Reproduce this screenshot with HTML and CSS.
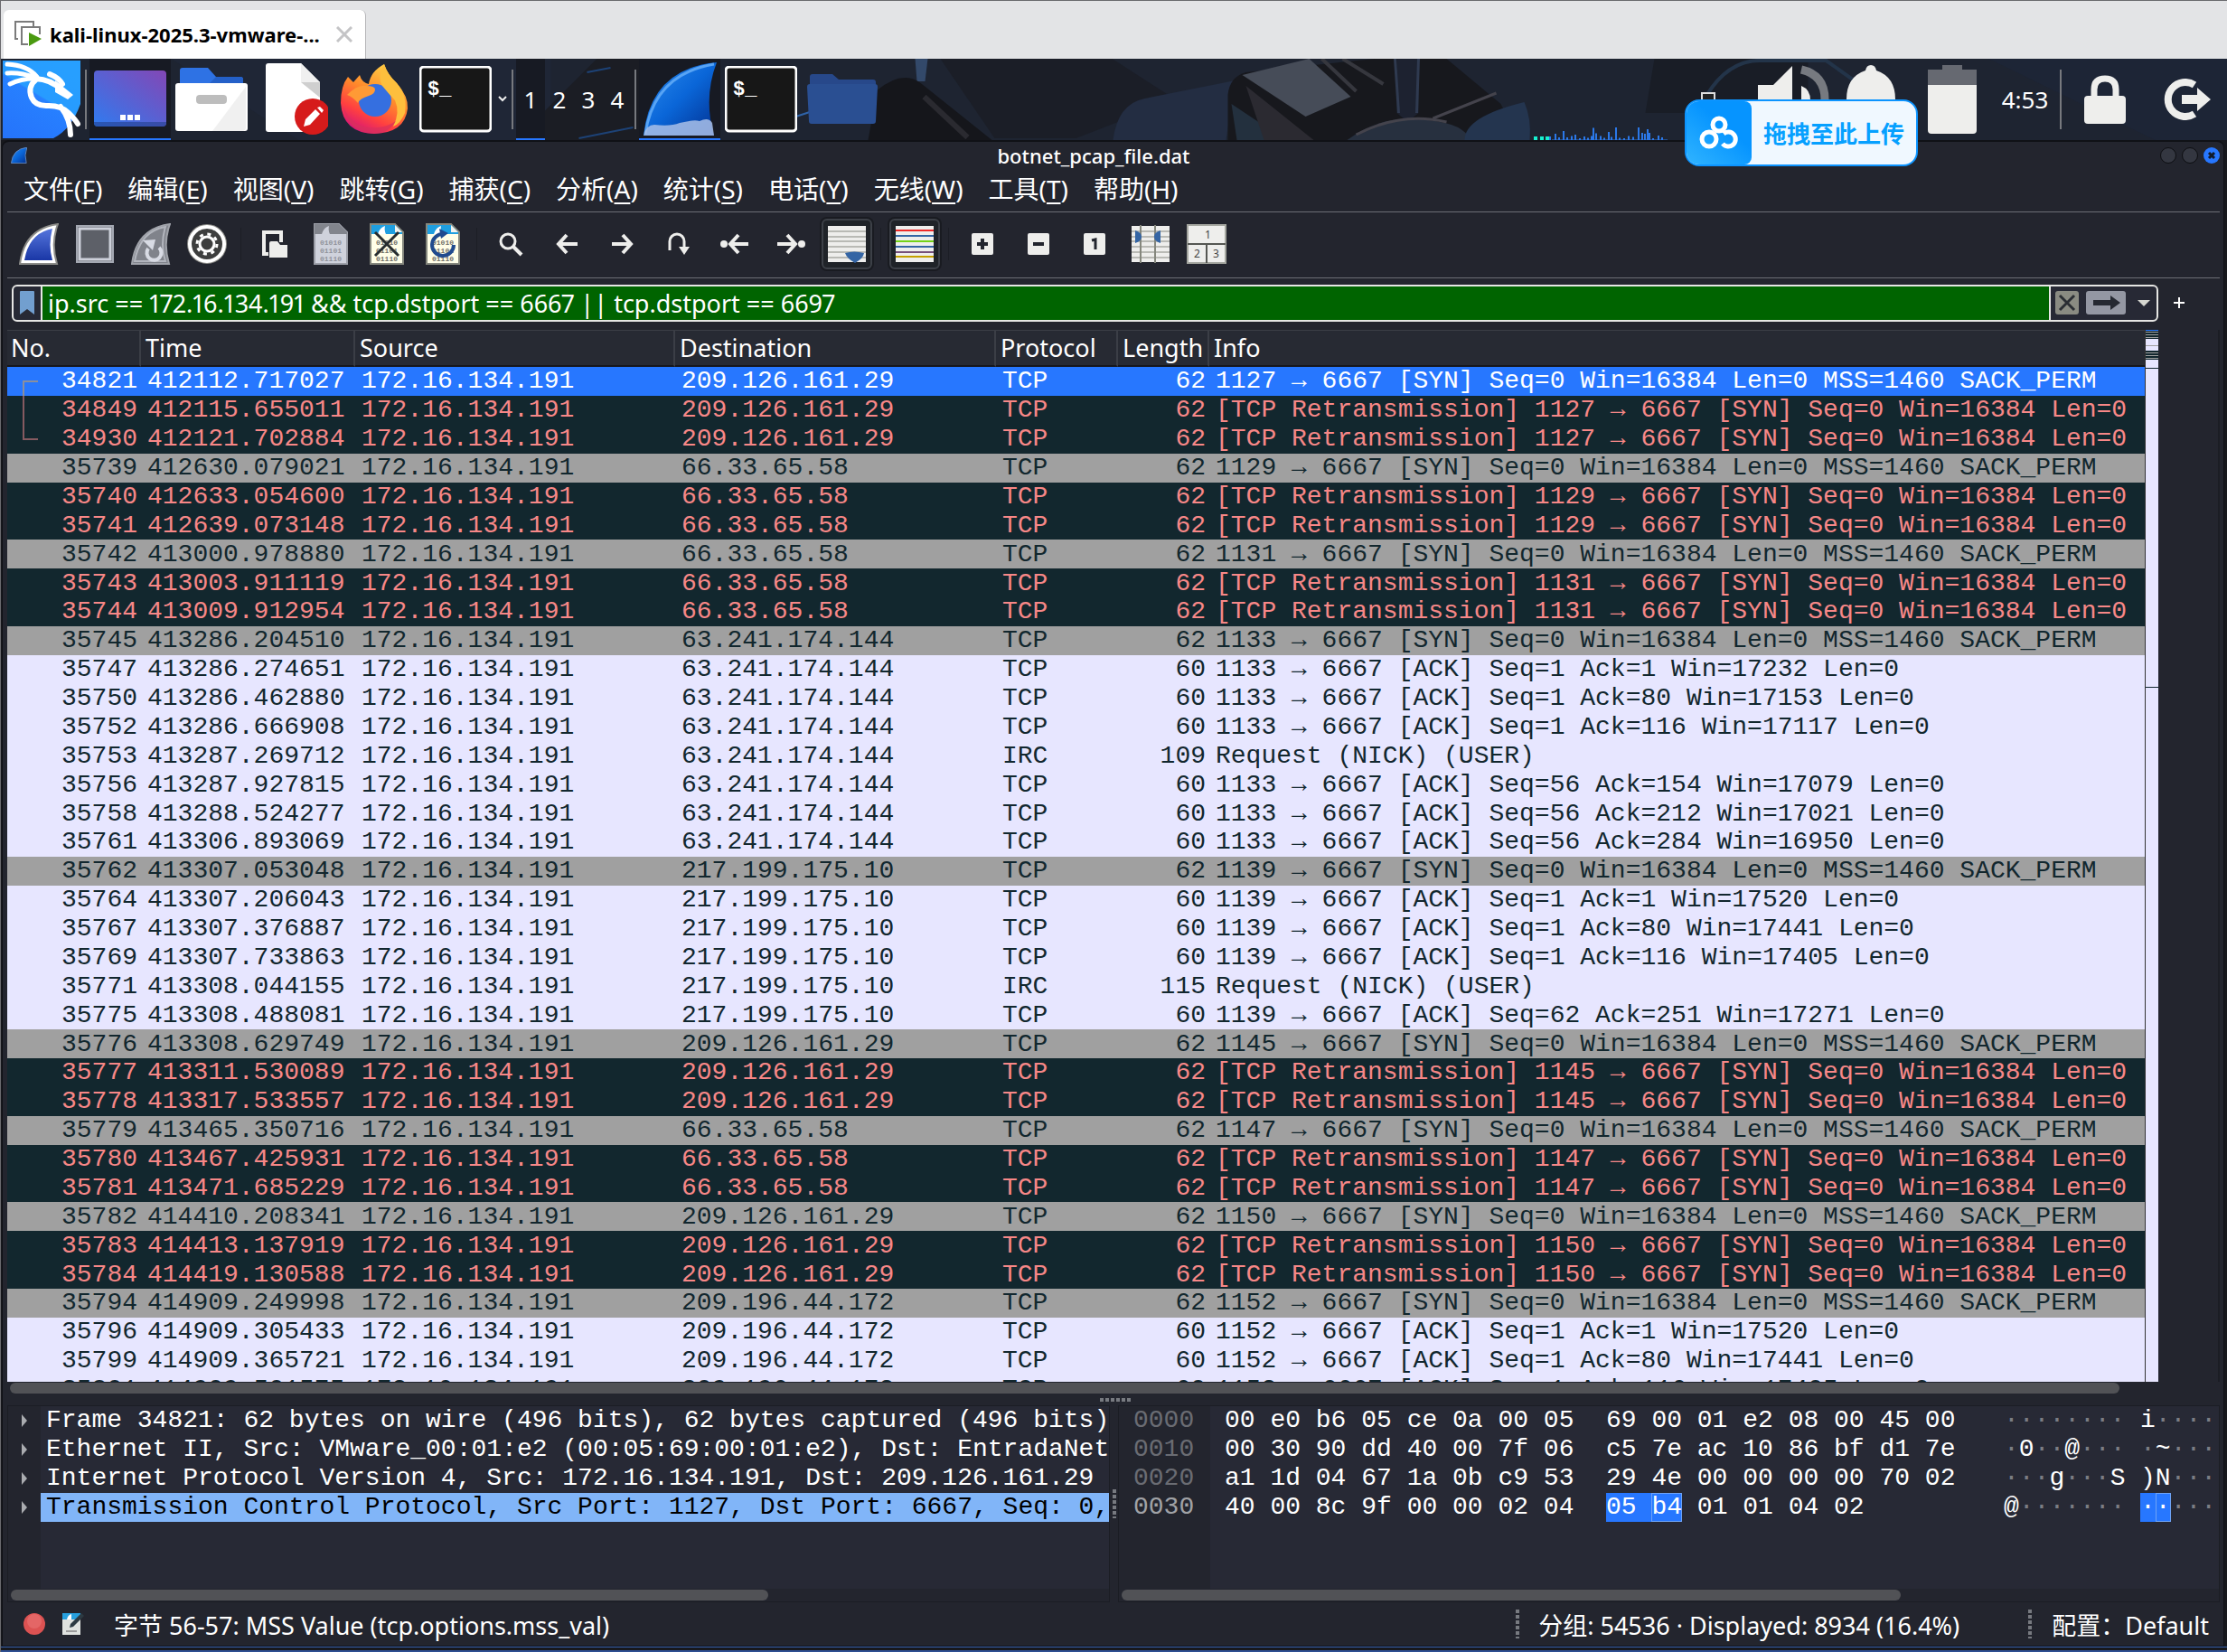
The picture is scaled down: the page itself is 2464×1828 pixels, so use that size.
FILE: index.html
```html
<!DOCTYPE html>
<html lang="zh-CN">
<head>
<meta charset="utf-8">
<title>botnet_pcap_file.dat</title>
<link rel="stylesheet" href="styles.css">
</head>
<body>
<svg class="defs" aria-hidden="true">
  <defs>
    <linearGradient id="finBlue" x1="0" y1="0" x2="1" y2="1"><stop offset="0" stop-color="#2d8cf0"/><stop offset=".5" stop-color="#0a66d8"/><stop offset="1" stop-color="#022f8e"/></linearGradient>
    <linearGradient id="finTool" x1="0" y1="0" x2="0" y2="1"><stop offset="0" stop-color="#5575dc"/><stop offset="1" stop-color="#1a37a6"/></linearGradient>
    <linearGradient id="desk" x1="0" y1="1" x2="1" y2="0"><stop offset="0" stop-color="#2f7bf0"/><stop offset="1" stop-color="#8347b5"/></linearGradient>
    <linearGradient id="kaliBg" x1="0" y1="1" x2=".6" y2="0"><stop offset="0" stop-color="#2573fb"/><stop offset=".6" stop-color="#2780ff"/><stop offset=".62" stop-color="#279bff"/><stop offset="1" stop-color="#279fff"/></linearGradient>
    <linearGradient id="foxBody" x1=".8" y1="0" x2=".3" y2="1"><stop offset="0" stop-color="#ffd94a"/><stop offset=".45" stop-color="#ff8a2b"/><stop offset=".75" stop-color="#ff4040"/><stop offset="1" stop-color="#d4147a"/></linearGradient>
    <symbol id="page" viewBox="0 0 38 46"><path d="M1 1h27l9 9v35H1z" fill="#fffee8" stroke="#85877d" stroke-width="2"/><path d="M2 2h26l8 8v2H2z" fill="#1f9fe0"/><path d="M9 12q2-7 8-9-1 5 1 9z" fill="#fff"/><path d="M28 2v8h8z" fill="#f2f2ee"/></symbol>
  </defs>
</svg>

<header class="tabs">
  <div class="tab">
    <svg class="tab-icon" width="32" height="30" viewBox="0 0 32 30"><path d="M4 20H1V1h20v5" fill="none" stroke="#7b7b7b" stroke-width="2"/><path d="M15 26H8V7h20v8" fill="none" stroke="#7b7b7b" stroke-width="2"/><path d="M16 13l14 7-14 8z" fill="#4a9a10"/></svg>
    <span class="tab-title">kali-linux-2025.3-vmware-...</span>
    <button class="tab-close" aria-label="Close"><svg width="18" height="18" viewBox="0 0 18 18"><path d="M1 1l16 16M17 1L1 17" stroke="#c4c4c6" stroke-width="3"/></svg></button>
  </div>
</header>

<nav class="panel">
  <svg class="wallpaper" viewBox="0 0 2464 90" preserveAspectRatio="xMidYMid slice" aria-hidden="true">
    <rect width="2464" height="90" fill="#1e2431"/>
    <path d="M189 0h420v90H330z" fill="#1f2636"/><path d="M570 90l90-90h70l60 90z" fill="#1b1d24"/>
    <path d="M649 15l26-5M640 88l60-12" stroke="#1d4276" stroke-width="2"/>
    <path d="M1012 0h14l-3 25h-9z" fill="#33496a"/><path d="M1040 0h190l70 45-110 43h-90z" fill="#1b1e27"/>
    <path d="M970 35q30-25 52-5l75 60H960z" fill="#15161b"/><path d="M1022 42l48 45" stroke="#2a2a30" stroke-width="6"/><path d="M880 64l80-26" stroke="#2f63a8" stroke-width="2"/>
    <path d="M1231 90q5-40 35-46l100-20-10 66z" fill="#232d42"/>
    <path d="M1358 90V40q2-20 20-25L1520 0h80l60 50 20 40z" fill="#17181d"/>
    <path d="M1374 18L1448 0l46 42-50 22z" fill="#464c58"/><path d="M1362 50l60 40h-54z" fill="#23303e"/><path d="M1378 30l75 60h-55z" fill="#2b2a31"/>
    <path d="M1462 0l38 36M1485 0l45 28" stroke="#36373e" stroke-width="4"/><path d="M1545 0v60l12 10 12-10V0z" fill="#1d2230"/><path d="M1543 0l4 60M1569 0l-2 60" stroke="#2f3a50" stroke-width="3"/>
    <path d="M1490 90q40-30 90-22 40 4 46 22z" fill="#27303f"/><path d="M1500 84q50-26 100-14M1585 66l70-28" stroke="#44434c" stroke-width="3" fill="none"/><path d="M1620 90q0-26 66-42 8 18 6 42z" fill="#24354f"/>
    <path d="M1830 0h170v60h-180z" fill="#191d26"/><path d="M1888 40q25-40 62-38h70l70 50" fill="none" stroke="#233449" stroke-width="4"/>
    <path d="M2330 40l60 50" stroke="#1f3050" stroke-width="4"/><path d="M2200 0h264v90h-80z" fill="#1d2536"/>
  </svg>

  <button class="kali" aria-label="Applications">
    <svg width="90" height="90" viewBox="0 0 90 90"><path d="M2 2h86v48q-10 28-30 38H2z" fill="url(#kaliBg)"/><g fill="none" stroke="#fff" stroke-linecap="round"><path d="M7 6q22 1 33 14M7 16q16-1 30 5M10 28q12-6 27-6" stroke-width="5"/><path d="M39 23q-10 8-5 20 4 9 16 9 16-1 25 8 8 8 10 12M66 53q11 14 11 31M54 17q10 4 14 11M38 22q18 1 28 12" stroke-width="6"/></g><path d="M60 24l20 16-6 5-14-8z" fill="#fff"/></svg>
  </button>
  <i class="vsep"></i>
  <button class="launch active" aria-label="Desktop"><svg width="80" height="64" viewBox="0 0 80 64"><rect width="80" height="62" rx="4" fill="url(#desk)"/><path d="M0 57h80q0 5-4 5H4q-4 0-4-5z" fill="#23408c" opacity=".6"/><path d="M29 49h6v6h-6zM37 49h6v6h-6zM45 49h6v6h-6z" fill="#fff"/></svg></button>
  <button class="launch" aria-label="Files"><svg width="80" height="72" viewBox="0 0 80 72"><path d="M5 4q0-3 3-3h28l9 10h27q3 0 3 3v20H5z" fill="#2e72e4"/><path d="M45 11h27q3 0 3 3v4H38z" fill="#2460c8"/><rect y="18" width="80" height="53" rx="3" fill="#fff"/><path d="M78 22v45q0 4-4 4H41z" fill="#f0f0f0"/><rect x="23" y="31" width="34" height="10" rx="4" fill="#bdbdbd"/></svg></button>
  <button class="launch" aria-label="Text editor"><svg width="78" height="80" viewBox="-9 0 78 80"><path d="M0 3q0-3 3-3h36l21 21v52q0 3-3 3H3q-3 0-3-3z" fill="#fff"/><path d="M39 0l21 21H39z" fill="#f0f0f0"/><path d="M39 21h21v17z" fill="#cfcfcf"/><circle cx="52" cy="59" r="20" fill="#d61b1b"/><path d="M42 70l2-8 11-11 5 5-11 12zM57 49l3-1 4 4-2 3z" fill="#fff"/></svg></button>
  <button class="launch" aria-label="Firefox"><svg width="76" height="78" viewBox="0 0 76 78"><path d="M49 0q4 12 14 21 13 15 12 28-3 27-37 28Q3 76 1 43q0-19 8-29l6 6 7-8q2 8 10 10 2-14 17-22z" fill="url(#foxBody)"/><circle cx="39" cy="40" r="18" fill="#356fe0"/><path d="M8 34q12-12 21-10 10 0 10 4 0 5-7 7-10 3-12 8-6-7-12-9z" fill="#ff9a35"/><path d="M49 0q4 12 14 21 12 14 9 33-5 12-13 15 8-16 2-29-5-5-14-16-6-10 2-24z" fill="#fdbf3d"/><path d="M4 48q12 25 38 22 11-1 20-7-8 14-25 14Q10 76 4 48z" fill="#d8305c" opacity=".7"/></svg></button>
  <button class="launch" aria-label="Terminal"><svg width="80" height="74" viewBox="0 0 80 74"><rect x="1" y="1" width="78" height="71" rx="4" fill="#171717" stroke="#fff" stroke-width="3"/><text class="prompt" x="9" y="32">$_</text></svg></button>
  <svg class="chev" width="14" height="8" viewBox="0 0 14 8"><path d="M3 1l4 4 4-4" fill="none" stroke="#eee" stroke-width="2"/></svg>
  <i class="vsep"></i>
  <button class="ws active">1</button><button class="ws">2</button><button class="ws">3</button><button class="ws">4</button>
  <i class="vsep"></i>
  <button class="launch active" aria-label="Wireshark"><svg width="84" height="84" viewBox="0 0 84 84"><path d="M2 82Q10 8 83 1 68 40 80 82z" fill="url(#finBlue)"/><path d="M4 80Q14 14 80 3" fill="none" stroke="#58a4f4" stroke-width="3"/><path d="M2 82q3-12 12-12 18 2 28-2 16-4 22-2 10-5 14 2l2 14z" fill="#a9bfe8" opacity=".85"/></svg></button>
  <button class="launch" aria-label="Terminal window"><svg width="80" height="74" viewBox="0 0 80 74"><rect x="1" y="1" width="78" height="71" rx="4" fill="#171717" stroke="#fff" stroke-width="3"/><text class="prompt" x="9" y="32">$_</text></svg></button>
  <button class="launch" aria-label="Folder window"><svg width="78" height="56" viewBox="0 0 78 56"><path d="M3 3q0-3 3-3h22l7 6h38q3 0 3 3v14H3z" fill="#27488a"/><path d="M0 14q0-3 3-3h72q3 0 3 3l-2 38q0 3-3 3H5q-3 0-3-3z" fill="#2a4f92"/></svg></button>

  <svg class="graph" width="148" height="90" viewBox="0 0 148 90"><path d="M0 86h4v4H0zM7 86h4v4H7zM13 86h4v4h-4z" fill="#17f0d0"/><path transform="translate(0 46) scale(1 .5)" d="M18 88V80M24 88V74M28 88v-6M33 88V68M37 88v-6M42 88v-9M46 88V76M51 88v-4M56 88v-8M60 88v-5M64 88v-9M66 88V61M69 88V73M74 88v-9M78 88v-5M83 88V70M86 88v-7M91 88V60M95 88v-5M100 88v-4M105 88v-9M110 88v-7M116 88V60M120 88V72M123 88V74M126 88V64M128 88V72M132 88v-4M138 88v-10M142 88v-6M20 88h128" stroke="#2b78e8" stroke-width="2"/></svg>
  <button class="launch" aria-label="Network"><svg width="90" height="90" viewBox="0 0 90 90"><path d="M38 38h14v16H38z" fill="#222" stroke="#ddd" stroke-width="2"/></svg></button>
  <button class="launch" aria-label="Volume"><svg width="90" height="90" viewBox="0 0 90 90"><path d="M10 29h17L48 8v76L27 62H10z" fill="#eeeeec"/><path d="M58 30q10 4 10 16t-10 14z" fill="#eeeeec"/><path d="M58 12q26 6 26 33T58 78" fill="none" stroke="#777a80" stroke-width="9"/></svg></button>
  <button class="launch" aria-label="Notifications"><svg width="90" height="90" viewBox="0 0 90 90"><path d="M45 7q5 0 6 6 21 7 21 32v25H18V45q0-25 21-32 1-6 6-6z" fill="#eeeeec"/></svg></button>
  <button class="launch" aria-label="Battery"><svg width="90" height="90" viewBox="0 0 90 90"><path d="M18 12h16V7h22v5h16v17H18z" fill="#666971"/><path d="M18 29h54v50q0 4-4 4H22q-4 0-4-4z" fill="#eeeeec"/></svg></button>
  <time class="clock">4:53</time>
  <i class="vsep"></i>
  <button class="launch" aria-label="Lock"><svg width="46" height="54" viewBox="0 0 46 54"><path d="M11 26V16q0-12 12-12t12 12v10" fill="none" stroke="#eeeeec" stroke-width="7"/><rect y="23" width="46" height="31" rx="4" fill="#eeeeec"/></svg></button>
  <button class="launch" aria-label="Log out"><svg width="54" height="46" viewBox="0 0 54 46"><path d="M36 7A19 19 0 1 0 36 39" fill="none" stroke="#eeeeec" stroke-width="8"/><path d="M22 18h17v-8l15 13-15 13v-8H22z" fill="#eeeeec"/></svg></button>
</nav>

<a class="drop" href="#upload">
  <span class="drop-logo"><svg width="44" height="38" viewBox="0 0 44 38"><g fill="none" stroke="#fff" stroke-width="5"><circle cx="22" cy="10" r="7"/><circle cx="11" cy="26" r="8"/><path d="M27 20a8 8 0 1 1-1 11"/></g></svg></span>
  <span class="drop-text">拖拽至此上传</span>
</a>

<main class="window">
  <div class="titlebar">
    <svg class="title-fin" width="18" height="18" viewBox="0 0 84 84"><path d="M2 82Q10 8 83 1 68 40 80 82z" fill="url(#finBlue)" stroke="#6a8fc4" stroke-width="4"/></svg>
    <h1>botnet_pcap_file.dat</h1>
    <div class="winbtns"><button aria-label="Minimize"></button><button aria-label="Maximize"></button><button class="close" aria-label="Close window"><svg width="18" height="18" viewBox="0 0 18 18"><path d="M6 6l6 6M12 6l-6 6" stroke="#111a2a" stroke-width="3"/></svg></button></div>
  </div>
  <div class="menubar">
    <button>文件(<u>F</u>)</button><button>编辑(<u>E</u>)</button><button>视图(<u>V</u>)</button><button>跳转(<u>G</u>)</button><button>捕获(<u>C</u>)</button><button>分析(<u>A</u>)</button><button>统计(<u>S</u>)</button><button>电话(<u>Y</u>)</button><button>无线(<u>W</u>)</button><button>工具(<u>T</u>)</button><button>帮助(<u>H</u>)</button>
  </div>
  <div class="toolbar">
    <button aria-label="Start capture"><svg width="44" height="46" viewBox="0 0 44 46"><path d="M1 45Q6 6 43 1 35 22 42 45z" fill="#fff" stroke="#8b8b88" stroke-width="2"/><path d="M6 41Q11 11 37 6 32 24 37 41z" fill="url(#finTool)"/></svg></button>
    <button aria-label="Stop capture"><svg width="42" height="42" viewBox="0 0 42 42"><rect x="1" y="1" width="40" height="40" fill="#5d6068" stroke="#a4a8b2" stroke-width="2"/><rect x="4" y="4" width="34" height="34" fill="none" stroke="#cdd0da" stroke-width="3"/></svg></button>
    <button aria-label="Restart capture"><svg width="44" height="46" viewBox="0 0 44 46"><path d="M1 45Q6 6 43 1 35 22 42 45z" fill="#80838b" stroke="#a0a3aa" stroke-width="2"/><path d="M4 42Q10 9 38 4 32 24 38 42z" fill="none" stroke="#b2b5bd" stroke-width="2"/><path d="M19 28a8 8 0 1 0 12-1" fill="none" stroke="#d8dbe4" stroke-width="4"/><path d="M13 19l14-1-3 12z" fill="#d8dbe4"/></svg></button>
    <button aria-label="Capture options"><svg width="44" height="46" viewBox="0 0 44 46"><circle cx="22" cy="23" r="21" fill="#3d3e3e" stroke="#8c8c88" stroke-width="2"/><circle cx="22" cy="23" r="19" fill="none" stroke="#fff" stroke-width="4"/><circle cx="22" cy="23" r="8" fill="none" stroke="#fff" stroke-width="3"/><circle cx="22" cy="23" r="11" fill="none" stroke="#fff" stroke-width="3" stroke-dasharray="4 4.640"/></svg></button>
    <i class="tsep"></i>
    <button aria-label="Open"><svg width="28" height="30" viewBox="0 0 28 30"><path d="M7 26H2V2h19v11" fill="none" stroke="#eeeeec" stroke-width="4"/><path d="M8 30V14q0-2 2-2h7l3 4h8v14z" fill="#eeeeec"/></svg></button>
    <button aria-label="Save"><svg width="38" height="46" viewBox="0 0 38 46"><path d="M1 1h27l9 9v35H1z" fill="#cfd2dc" stroke="#9c9fa8" stroke-width="2"/><path d="M1 1h27l9 9v2H1z" fill="#82858d"/><path d="M9 12q2-7 8-9-1 5 1 9z" fill="#cfd2dc"/><g class="bits bits-off"><text x="7" y="24">01010</text><text x="7" y="33">01101</text><text x="7" y="42">01110</text></g></svg></button>
    <button aria-label="Close file"><svg width="38" height="46" viewBox="0 0 38 46"><use href="#page"/><g class="bits"><text x="7" y="24">01010</text><text x="7" y="33">01101</text><text x="7" y="42">01110</text></g><path d="M6 10l26 26M32 10L6 36" stroke="#262b2e" stroke-width="3"/></svg></button>
    <button aria-label="Reload"><svg width="38" height="46" viewBox="0 0 38 46"><use href="#page"/><g class="bits"><text x="7" y="24">01010</text><text x="7" y="33">01101</text><text x="7" y="42">01110</text></g><path d="M20 12a12 12 0 1 0 11 12" fill="none" stroke="#204a8e" stroke-width="4"/><path d="M15 6l10 5-8 6z" fill="#204a8e"/></svg></button>
    <i class="tsep"></i>
    <button aria-label="Find"><svg width="28" height="28" viewBox="0 0 28 28"><circle cx="11" cy="11" r="8" fill="none" stroke="#eeeeec" stroke-width="3"/><path d="M17 17l9 9" stroke="#eeeeec" stroke-width="4"/></svg></button>
    <button aria-label="Back"><svg width="24" height="24" viewBox="0 0 24 24"><path d="M24 12H4M12 2l-9 10 9 10" fill="none" stroke="#eeeeec" stroke-width="4"/></svg></button>
    <button aria-label="Forward"><svg width="24" height="24" viewBox="0 0 24 24"><path d="M0 12h20M12 2l9 10-9 10" fill="none" stroke="#eeeeec" stroke-width="4"/></svg></button>
    <button aria-label="Go to packet"><svg width="24" height="26" viewBox="0 0 24 26"><path d="M2 20V10a8 8 0 0 1 16 0v12" fill="none" stroke="#eeeeec" stroke-width="3"/><path d="M12 16h12l-6 9z" fill="#eeeeec"/></svg></button>
    <button aria-label="First packet"><svg width="32" height="24" viewBox="0 0 32 24"><path d="M31 12H13M20 2l-9 10 9 10" fill="none" stroke="#eeeeec" stroke-width="4"/><circle cx="4" cy="12" r="4" fill="#eeeeec"/></svg></button>
    <button aria-label="Last packet"><svg width="32" height="24" viewBox="0 0 32 24"><path d="M1 12h18M12 2l9 10-9 10" fill="none" stroke="#eeeeec" stroke-width="4"/><circle cx="28" cy="12" r="4" fill="#eeeeec"/></svg></button>
    <button class="on" aria-label="Auto scroll" aria-pressed="true"><svg width="42" height="42" viewBox="0 0 42 42"><path d="M0 1h42v40H0z" fill="#eeeeec"/><path d="M0 7h42M0 13h42M0 18h42M0 24h42M0 30h42M0 36h42" stroke="#b9bab5" stroke-width="2"/><path d="M19 31q10-3 21 0-1 6-10 11-9-5-11-11z" fill="#3465a4"/></svg></button>
    <i class="tsep"></i>
    <button class="on" aria-label="Colorize" aria-pressed="true"><svg width="42" height="42" viewBox="0 0 42 42"><path d="M0 1h42v40H0z" fill="#eeeeec"/><path d="M0 6h42" stroke="#ef2929" stroke-width="2"/><path d="M0 12h42M0 24h42" stroke="#3465a4" stroke-width="2"/><path d="M0 18h42" stroke="#73d216" stroke-width="2"/><path d="M0 30h42" stroke="#75507b" stroke-width="2"/><path d="M0 35h42" stroke="#c4a000" stroke-width="2"/></svg></button>
    <i class="tsep"></i>
    <button aria-label="Zoom in"><svg width="24" height="24" viewBox="0 0 24 24"><rect width="24" height="24" rx="2" fill="#eeeeec"/><path d="M6 12h12M12 6v12" stroke="#22252e" stroke-width="4"/></svg></button>
    <button aria-label="Zoom out"><svg width="24" height="24" viewBox="0 0 24 24"><rect width="24" height="24" rx="2" fill="#eeeeec"/><path d="M6 12h12" stroke="#22252e" stroke-width="4"/></svg></button>
    <button aria-label="Normal size"><svg width="24" height="24" viewBox="0 0 24 24"><rect width="24" height="24" rx="2" fill="#eeeeec"/><path d="M9 8l4-1v11" fill="none" stroke="#22252e" stroke-width="3"/></svg></button>
    <button aria-label="Resize columns"><svg width="42" height="42" viewBox="0 0 42 42"><path d="M0 1h42v40H0z" fill="#eeeeec"/><path d="M0 7h42M0 13h42M0 18h42M0 24h42M0 30h42M0 36h42" stroke="#b9bab5" stroke-width="2"/><path d="M10 0v42M26 0v42" stroke="#85877d" stroke-width="2"/><path d="M4 6q7 2 7 7t-7 7zM32 6q-7 2-7 7t7 7z" fill="#3465a4"/></svg></button>
    <button aria-label="Layout"><svg width="44" height="44" viewBox="0 0 44 44"><path d="M1 1h42v42H1z" fill="#eeeeec" stroke="#a5a7a0" stroke-width="2"/><path d="M1 22h42M22 22v21" stroke="#555753" stroke-width="2"/><g class="nums"><text x="20" y="16">1</text><text x="8" y="37">2</text><text x="29" y="37">3</text></g></svg></button>
  </div>
  <form class="filter">
    <div class="filter-box">
      <button type="button" class="mark" aria-label="Bookmarks"><svg width="16" height="28" viewBox="0 0 16 28"><path d="M0 2q0-1 1-1h14q1 0 1 1v25l-8-6-8 6z" fill="#729fcf"/></svg></button>
      <input type="text" aria-label="Display filter" value="ip.src == 172.16.134.191 &amp;&amp; tcp.dstport == 6667 || tcp.dstport == 6697">
      <button type="button" class="fb" aria-label="Clear"><svg width="26" height="26" viewBox="0 0 26 26"><rect width="26" height="26" rx="3" fill="#8a8b82"/><path d="M5 5l16 16M21 5L5 21" stroke="#2a2d33" stroke-width="3"/></svg></button>
      <button type="button" class="fb" aria-label="Apply"><svg width="44" height="26" viewBox="0 0 44 26"><rect width="44" height="26" rx="3" fill="#9497a3"/><path d="M8 10h19V5l11 8-11 8v-5H8z" fill="#262932"/></svg></button>
      <button type="button" class="fb" aria-label="History"><svg width="14" height="8" viewBox="0 0 14 8"><path d="M0 1h14L7 8z" fill="#d5d6d0"/></svg></button>
    </div>
    <button type="button" class="plus" aria-label="Add filter button"><svg width="12" height="12" viewBox="0 0 12 12"><path d="M6 0v12M0 6h12" stroke="#fff" stroke-width="2"/></svg></button>
  </form>

  <section class="list">
    <div class="list-main">
    <table class="packets">
      <colgroup><col class="c-no"><col class="c-time"><col class="c-src"><col class="c-dst"><col class="c-proto"><col class="c-len"><col></colgroup>
      <thead><tr><th>No.<th>Time<th>Source<th>Destination<th>Protocol<th>Length<th>Info</tr></thead>
      <tbody>
      <tr class="sel"><td><svg class="conv" viewBox="0 0 18 32" preserveAspectRatio="none"><path d="M17 16H1v16" fill="none" stroke="#8b8f9c" stroke-width="2"/></svg>34821<td>412112.717027<td>172.16.134.191<td>209.126.161.29<td>TCP<td>62<td>1127 → 6667 [SYN] Seq=0 Win=16384 Len=0 MSS=1460 SACK_PERM
      <tr class="bad"><td><svg class="conv" viewBox="0 0 18 32" preserveAspectRatio="none"><path d="M1 0v32" stroke="#855a60" stroke-width="2"/></svg>34849<td>412115.655011<td>172.16.134.191<td>209.126.161.29<td>TCP<td>62<td>[TCP Retransmission] 1127 → 6667 [SYN] Seq=0 Win=16384 Len=0
      <tr class="bad"><td><svg class="conv" viewBox="0 0 18 32" preserveAspectRatio="none"><path d="M1 0v16h16" fill="none" stroke="#855a60" stroke-width="2"/></svg>34930<td>412121.702884<td>172.16.134.191<td>209.126.161.29<td>TCP<td>62<td>[TCP Retransmission] 1127 → 6667 [SYN] Seq=0 Win=16384 Len=0
      <tr class="syn"><td>35739<td>412630.079021<td>172.16.134.191<td>66.33.65.58<td>TCP<td>62<td>1129 → 6667 [SYN] Seq=0 Win=16384 Len=0 MSS=1460 SACK_PERM
      <tr class="bad"><td>35740<td>412633.054600<td>172.16.134.191<td>66.33.65.58<td>TCP<td>62<td>[TCP Retransmission] 1129 → 6667 [SYN] Seq=0 Win=16384 Len=0
      <tr class="bad"><td>35741<td>412639.073148<td>172.16.134.191<td>66.33.65.58<td>TCP<td>62<td>[TCP Retransmission] 1129 → 6667 [SYN] Seq=0 Win=16384 Len=0
      <tr class="syn"><td>35742<td>413000.978880<td>172.16.134.191<td>66.33.65.58<td>TCP<td>62<td>1131 → 6667 [SYN] Seq=0 Win=16384 Len=0 MSS=1460 SACK_PERM
      <tr class="bad"><td>35743<td>413003.911119<td>172.16.134.191<td>66.33.65.58<td>TCP<td>62<td>[TCP Retransmission] 1131 → 6667 [SYN] Seq=0 Win=16384 Len=0
      <tr class="bad"><td>35744<td>413009.912954<td>172.16.134.191<td>66.33.65.58<td>TCP<td>62<td>[TCP Retransmission] 1131 → 6667 [SYN] Seq=0 Win=16384 Len=0
      <tr class="syn"><td>35745<td>413286.204510<td>172.16.134.191<td>63.241.174.144<td>TCP<td>62<td>1133 → 6667 [SYN] Seq=0 Win=16384 Len=0 MSS=1460 SACK_PERM
      <tr><td>35747<td>413286.274651<td>172.16.134.191<td>63.241.174.144<td>TCP<td>60<td>1133 → 6667 [ACK] Seq=1 Ack=1 Win=17232 Len=0
      <tr><td>35750<td>413286.462880<td>172.16.134.191<td>63.241.174.144<td>TCP<td>60<td>1133 → 6667 [ACK] Seq=1 Ack=80 Win=17153 Len=0
      <tr><td>35752<td>413286.666908<td>172.16.134.191<td>63.241.174.144<td>TCP<td>60<td>1133 → 6667 [ACK] Seq=1 Ack=116 Win=17117 Len=0
      <tr><td>35753<td>413287.269712<td>172.16.134.191<td>63.241.174.144<td>IRC<td>109<td>Request (NICK) (USER)
      <tr><td>35756<td>413287.927815<td>172.16.134.191<td>63.241.174.144<td>TCP<td>60<td>1133 → 6667 [ACK] Seq=56 Ack=154 Win=17079 Len=0
      <tr><td>35758<td>413288.524277<td>172.16.134.191<td>63.241.174.144<td>TCP<td>60<td>1133 → 6667 [ACK] Seq=56 Ack=212 Win=17021 Len=0
      <tr><td>35761<td>413306.893069<td>172.16.134.191<td>63.241.174.144<td>TCP<td>60<td>1133 → 6667 [ACK] Seq=56 Ack=284 Win=16950 Len=0
      <tr class="syn"><td>35762<td>413307.053048<td>172.16.134.191<td>217.199.175.10<td>TCP<td>62<td>1139 → 6667 [SYN] Seq=0 Win=16384 Len=0 MSS=1460 SACK_PERM
      <tr><td>35764<td>413307.206043<td>172.16.134.191<td>217.199.175.10<td>TCP<td>60<td>1139 → 6667 [ACK] Seq=1 Ack=1 Win=17520 Len=0
      <tr><td>35767<td>413307.376887<td>172.16.134.191<td>217.199.175.10<td>TCP<td>60<td>1139 → 6667 [ACK] Seq=1 Ack=80 Win=17441 Len=0
      <tr><td>35769<td>413307.733863<td>172.16.134.191<td>217.199.175.10<td>TCP<td>60<td>1139 → 6667 [ACK] Seq=1 Ack=116 Win=17405 Len=0
      <tr><td>35771<td>413308.044155<td>172.16.134.191<td>217.199.175.10<td>IRC<td>115<td>Request (NICK) (USER)
      <tr><td>35775<td>413308.488081<td>172.16.134.191<td>217.199.175.10<td>TCP<td>60<td>1139 → 6667 [ACK] Seq=62 Ack=251 Win=17271 Len=0
      <tr class="syn"><td>35776<td>413308.629749<td>172.16.134.191<td>209.126.161.29<td>TCP<td>62<td>1145 → 6667 [SYN] Seq=0 Win=16384 Len=0 MSS=1460 SACK_PERM
      <tr class="bad"><td>35777<td>413311.530089<td>172.16.134.191<td>209.126.161.29<td>TCP<td>62<td>[TCP Retransmission] 1145 → 6667 [SYN] Seq=0 Win=16384 Len=0
      <tr class="bad"><td>35778<td>413317.533557<td>172.16.134.191<td>209.126.161.29<td>TCP<td>62<td>[TCP Retransmission] 1145 → 6667 [SYN] Seq=0 Win=16384 Len=0
      <tr class="syn"><td>35779<td>413465.350716<td>172.16.134.191<td>66.33.65.58<td>TCP<td>62<td>1147 → 6667 [SYN] Seq=0 Win=16384 Len=0 MSS=1460 SACK_PERM
      <tr class="bad"><td>35780<td>413467.425931<td>172.16.134.191<td>66.33.65.58<td>TCP<td>62<td>[TCP Retransmission] 1147 → 6667 [SYN] Seq=0 Win=16384 Len=0
      <tr class="bad"><td>35781<td>413471.685229<td>172.16.134.191<td>66.33.65.58<td>TCP<td>62<td>[TCP Retransmission] 1147 → 6667 [SYN] Seq=0 Win=16384 Len=0
      <tr class="syn"><td>35782<td>414410.208341<td>172.16.134.191<td>209.126.161.29<td>TCP<td>62<td>1150 → 6667 [SYN] Seq=0 Win=16384 Len=0 MSS=1460 SACK_PERM
      <tr class="bad"><td>35783<td>414413.137919<td>172.16.134.191<td>209.126.161.29<td>TCP<td>62<td>[TCP Retransmission] 1150 → 6667 [SYN] Seq=0 Win=16384 Len=0
      <tr class="bad"><td>35784<td>414419.130588<td>172.16.134.191<td>209.126.161.29<td>TCP<td>62<td>[TCP Retransmission] 1150 → 6667 [SYN] Seq=0 Win=16384 Len=0
      <tr class="syn"><td>35794<td>414909.249998<td>172.16.134.191<td>209.196.44.172<td>TCP<td>62<td>1152 → 6667 [SYN] Seq=0 Win=16384 Len=0 MSS=1460 SACK_PERM
      <tr><td>35796<td>414909.305433<td>172.16.134.191<td>209.196.44.172<td>TCP<td>60<td>1152 → 6667 [ACK] Seq=1 Ack=1 Win=17520 Len=0
      <tr><td>35799<td>414909.365721<td>172.16.134.191<td>209.196.44.172<td>TCP<td>60<td>1152 → 6667 [ACK] Seq=1 Ack=80 Win=17441 Len=0
      <tr><td>35801<td>414909.501575<td>172.16.134.191<td>209.196.44.172<td>TCP<td>60<td>1152 → 6667 [ACK] Seq=1 Ack=116 Win=17405 Len=0
      </tbody>
    </table>
    </div>
    <div class="minimap"></div>
    <div class="gutter"></div>
  </section>
  <div class="hscroll"><i class="thumb thumb-list"></i></div>
  <div class="splitter"><i class="dots-h"></i></div>

  <section class="panes">
    <div class="pane details">
      <ul class="tree">
        <li><span>Frame 34821: 62 bytes on wire (496 bits), 62 bytes captured (496 bits)</span>
        <li><span>Ethernet II, Src: VMware_00:01:e2 (00:05:69:00:01:e2), Dst: EntradaNet</span>
        <li><span>Internet Protocol Version 4, Src: 172.16.134.191, Dst: 209.126.161.29</span>
        <li class="picked"><span>Transmission Control Protocol, Src Port: 1127, Dst Port: 6667, Seq: 0,</span>
      </ul>
      <div class="hscroll"><i class="thumb thumb-tree"></i></div>
    </div>
    <div class="vsplit"><i class="dots-v"></i></div>
    <div class="pane bytes">
      <div class="hexwrap">
      <table class="hex">
        <colgroup><col class="h-off"><col class="h-a"><col class="h-b"><col class="h-c"><col></colgroup>
        <tr><th>0000<td>00 e0 b6 05 ce 0a 00 05<td>69 00 01 e2 08 00 45 00<td><s>········</s><td>i<s>····</s>
        <tr><th>0010<td>00 30 90 dd 40 00 7f 06<td>c5 7e ac 10 86 bf d1 7e<td><s>·</s>0<s>··</s>@<s>···</s><td><s>·</s>~<s>···</s>
        <tr><th>0020<td>a1 1d 04 67 1a 0b c9 53<td>29 4e 00 00 00 00 70 02<td><s>···</s>g<s>···</s>S<td>)N<s>···</s>
        <tr class="cur"><th>0030<td>40 00 8c 9f 00 00 02 04<td><mark>05 <b>b4</b></mark> 01 01 04 02<td>@<s>·······</s><td><mark>·<b>·</b></mark><s>···</s>
      </table>
      </div>
      <div class="hscroll"><i class="thumb thumb-hex"></i></div>
    </div>
  </section>

  <footer class="status">
    <button aria-label="Expert information"><svg width="26" height="26" viewBox="0 0 26 26"><circle cx="13" cy="13" r="12" fill="#dc5252"/><circle cx="13" cy="10" r="8" fill="#ea7474" opacity=".6"/></svg></button>
    <button aria-label="Capture comments"><svg width="26" height="26" viewBox="0 0 26 26"><path d="M1 1h20v24H1z" fill="#dfe2df"/><path d="M1 1h20v7H1z" fill="#27a0de"/><path d="M6 8q1-5 5-6v6z" fill="#fff"/><path d="M22 1l3 3-12 12-4 1 1-4z" fill="#2c3a42"/><path d="M5 21h12" stroke="#9a9a9a" stroke-width="2"/></svg></button>
    <span class="field">字节 56-57: MSS Value (tcp.options.mss_val)</span>
    <i class="dots-v"></i>
    <span class="count">分组: 54536 · Displayed: 8934 (16.4%)</span>
    <i class="dots-v"></i>
    <span class="profile">配置：Default</span>
  </footer>
</main>
<div class="deskline"></div>
</body>
</html>
```
FILE: styles.css
```css
* { box-sizing: border-box; }
html, body { margin: 0; height: 100%; }
body {
  --win: #23252e;
  --line: #6c6e75;
  --mono: "Liberation Mono", "Noto Sans CJK SC", monospace;
  --ui: "Noto Sans", "Noto Sans CJK SC", sans-serif;
  display: flex;
  flex-direction: column;
  position: relative;
  overflow: hidden;
  border-top: 1px solid #6a6a6e;
  border-left: 1px solid #6a6a6e;
  background: #17181d;
  color: #fff;
  font-family: var(--ui);
  font-size: 27px;
}
button { margin: 0; padding: 0; border: 0; background: none; color: inherit; font: inherit; }
svg { display: block; flex: none; }
.defs { position: absolute; width: 0; height: 0; }

/* host tabs */
.tabs { flex: none; display: flex; height: 64px; padding: 10px 0 0 3px; background: #e3e4e6; }
.tab { display: flex; align-items: center; width: 401px; padding: 0 14px 0 12px; border-right: 1px solid #b5b5b8; border-radius: 6px 6px 0 0; background: #fff; color: #000; }
.tab-title { flex: 1; margin-left: 7px; font-family: "Noto Sans", sans-serif; font-size: 22px; font-weight: 700; white-space: nowrap; }

/* desktop panel */
.panel { flex: none; position: relative; display: flex; align-items: center; height: 90px; overflow: hidden; }
.wallpaper { position: absolute; inset: 0; width: 100%; height: 100%; }
.panel > * { flex: none; }
.panel > :not(.wallpaper) { position: relative; }
.kali { width: 90px; }
.vsep { width: 2px; height: 66px; margin: 0 3px; background: #77797e; }
.launch { display: flex; align-items: center; justify-content: center; width: 90px; height: 90px; }
.active { background: #171a23; box-shadow: inset 0 -2px #2777ff; }
.ws { width: 32px; height: 90px; font-size: 26px; }
.prompt { fill: #fff; font: 700 22px "Liberation Mono", monospace; }
.graph { margin-left: auto; }
.clock { width: 71px; text-align: center; font-size: 26px; }

/* upload bubble */
.drop { position: absolute; z-index: 2; top: 109px; right: 342px; display: flex; width: 258px; height: 74px; overflow: hidden; border: 2px solid #0c94ff; border-radius: 16px; background: #f0f8ff; color: #06a0ff; text-decoration: none; }
.drop-logo { display: flex; align-items: center; justify-content: center; width: 72px; border-radius: 0 8px 8px 0; background: linear-gradient(40deg, #30b4ff, #0694ff 60%); }
.drop-text { flex: 1; text-align: center; font: 700 26px/70px "Noto Sans CJK SC", sans-serif; }

/* capture window */
.window { flex: 1; display: flex; flex-direction: column; min-height: 0; margin: 0 3px 0 1px; padding: 0 4px 0 5px; border: 1px solid #101116; border-top-width: 2px; border-radius: 8px 8px 0 0; background: var(--win); }
.titlebar { flex: none; display: flex; align-items: center; height: 31px; padding: 0 0 2px 4px; }
.titlebar h1 { flex: 1; margin: 0; text-align: center; font-size: 22px; font-weight: 500; line-height: 28px; }
.winbtns { display: flex; gap: 6px; }
.winbtns button { width: 18px; height: 18px; border: 1px solid #0d0e12; border-radius: 9px; background: #343741; }
.winbtns .close { border: 0; background: #2777ff; }
.menubar { flex: none; display: flex; height: 47px; padding: 0 0 4px 4px; border-bottom: 1px solid var(--line); }
.menubar button { padding: 0 14px; font-size: 28px; line-height: 42px; white-space: nowrap; }
.menubar u { text-decoration-thickness: 2px; text-underline-offset: 4px; }
.toolbar { flex: none; display: flex; align-items: center; height: 73px; padding: 0 0 2px 4px; border-bottom: 1px solid var(--line); }
.toolbar button { display: flex; align-items: center; justify-content: center; flex: none; width: 62px; height: 58px; }
.toolbar .on { width: 56px; height: 56px; margin: 0 3px; border: 2px solid #3c4047; border-radius: 6px; background: #1f2328; box-shadow: 0 0 0 2px #191b21; }
.tsep { width: 1px; height: 36px; margin: 0 6px; background: #1c1e25; }
.bits { fill: #6f7069; font: 700 8px "Liberation Mono", monospace; }
.bits-off { fill: #8f929b; }
.nums { fill: #444; font: 12px "Noto Sans", sans-serif; }

.filter { flex: none; display: flex; align-items: center; height: 54px; padding: 0 68px 0 5px; }
.filter-box { flex: 1; display: flex; align-items: center; height: 41px; border: 2px solid #e6e6e4; border-radius: 6px; background: #272935; }
.mark { display: flex; align-items: center; justify-content: center; width: 32px; height: 100%; border-right: 2px solid #e6e6e4; }
.filter input { flex: 1; min-width: 0; height: 100%; margin: 0 5px 0 0; padding: 0 6px; border: 0; border-right: 2px solid #e6e6e4; outline: 0; background: #006400; color: #fff; font: 27px/36px var(--ui); font-variant-numeric: proportional-nums; }
.fb { margin-right: 8px; }
.fb:last-child { margin: 0 7px 0 5px; }
.plus { width: 12px; margin-left: 17px; margin-right: -29px; }

/* packet list */
.list { flex: 1; display: flex; min-height: 0; margin-top: 3px; }
.list-main { flex: 1; min-width: 0; overflow: hidden; background: #272935; }
.packets { width: 100%; height: 1189px; table-layout: fixed; border-collapse: separate; border-spacing: 0; }
.c-no { width: 148px; } .c-time { width: 237px; } .c-src { width: 354px; } .c-dst { width: 355px; } .c-proto { width: 135px; } .c-len { width: 101px; }
.packets th { height: 41px; padding: 0 5px; border-top: 1px solid #3b3e46; border-right: 2px solid #3b3e46; border-bottom: 2px solid #16171c; background: #272a33; text-align: left; font-weight: 400; line-height: 38px; }
.packets th:first-child { padding-left: 4px; }
.packets th:last-child { border-right: 0; }
.packets td { position: relative; padding: 0 7px; overflow: hidden; font: 28px/31px var(--mono); white-space: nowrap; }
.packets td:first-child, .packets td:nth-child(6) { padding-right: 4px; text-align: right; }
.packets tbody tr { background: #e7e6ff; color: #12272e; }
.packets tbody .sel { background: #2777ff; color: #fff; }
.packets tbody .bad { background: #12272e; color: #f78787; }
.packets tbody .syn { background: #a0a0a0; }
.conv { position: absolute; top: 0; left: 17px; width: 18px; height: 100%; }
.minimap { width: 15px; border-left: 1px solid #333; background:
  linear-gradient(#12272e, #12272e) 0 42px / 100% 1px no-repeat,
  linear-gradient(#12272e, #12272e) 0 395px / 100% 1px no-repeat,
  linear-gradient(#a0a0a0, #a0a0a0) 0 17px / 100% 1px no-repeat,
  repeating-linear-gradient(#12272e 0 2px, #a0a0a0 2px 3px) 0 23px / 100% 10px no-repeat,
  linear-gradient(#2777ff, #2777ff) 0 0 / 100% 1px no-repeat,
  repeating-linear-gradient(#12272e 0 2px, #a0a0a0 2px 3px) 0 0 / 100% 10px no-repeat,
  #e7e6ff; }
.gutter { width: 68px; border-right: 2px solid #1b1d24; }
.hscroll { flex: none; height: 14px; padding: 1px 0 0 3px; }
.thumb { display: block; height: 12px; border-radius: 6px; background: #515256; }
.thumb-list { width: 2334px; max-width: 96%; }
.thumb-tree { width: 69%; }
.thumb-hex { width: 71%; }
.splitter { flex: none; display: flex; align-items: center; justify-content: center; height: 12px; padding-left: 4px; }
.dots-h { width: 34px; height: 4px; background: repeating-linear-gradient(90deg, #777a80 0 4px, transparent 4px 6px); }
.dots-v { width: 4px; height: 32px; background: repeating-linear-gradient(#777a80 0 4px, transparent 4px 6px); }

/* details and bytes */
.panes { flex: none; display: flex; height: 218px; font: 28px/32px var(--mono); }
.pane { display: flex; flex-direction: column; min-width: 0; border: 1px solid #1b1d24; }
.details { flex: 1222; }
.bytes { flex: 1221; }
.tree, .hexwrap { flex: 1; margin: 0; padding: 0; overflow: hidden; background: #272935; }
.tree { background: linear-gradient(90deg, #23252e 36px, #272935 36px); list-style: none; }
.tree li { display: flex; align-items: center; white-space: pre; }
.tree li::before { content: ""; width: 0; margin: 0 15px 0 15px; border: 7px solid transparent; border-left: 6px solid #aaacb0; border-right: 0; }
.tree span { flex: 1; padding-left: 6px; overflow: hidden; }
.picked span { background: #81b5f8; color: #000; }
.vsplit { display: flex; flex: none; align-items: center; justify-content: center; width: 9px; }
.hexwrap { background: linear-gradient(90deg, #23252e 101px, #272935 101px); }
.hex { width: 100%; table-layout: fixed; border-collapse: collapse; }
.h-off { width: 117px; } .h-a { width: 422px; } .h-b { width: 440px; } .h-c { width: 151px; }
.hex th { padding: 0 0 0 16px; color: #6a6c73; font-weight: 400; text-align: left; }
.hex .cur th { color: #a0a2a6; }
.hex td { padding: 0; white-space: nowrap; }
.hex s { color: #7b7d84; text-decoration: none; }
.hex mark { display: inline-block; background: #2777ff; color: #fff; }
.hex b { display: inline-block; font-weight: 400; box-shadow: inset 0 0 0 1px #6ea3f5; }

.status { flex: none; display: flex; align-items: center; height: 48px; padding: 0 12px 0 17px; white-space: nowrap; }
.status button { margin-right: 17px; }
.field { flex: 1; margin-left: 15px; }
.count { width: 542px; margin-left: 21px; }
.profile { margin-left: 22px; }
.deskline { flex: none; height: 6px; border-top: 1px solid #3a63b0; border-bottom: 2px solid #2e4f92; background: #17181d; }
```
